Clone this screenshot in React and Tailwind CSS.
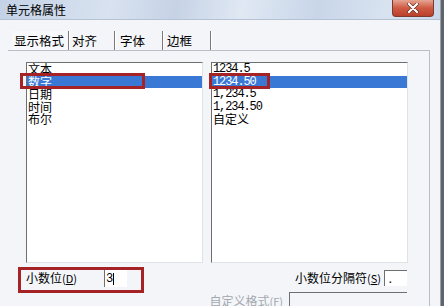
import React from "react";

const cjk = { fontFamily: '"Noto Sans CJK SC", "Noto Sans", sans-serif' };
const mono = { fontFamily: '"Liberation Mono", "Noto Sans CJK SC", monospace' };

const leftItems = ["文本", "数字", "日期", "时间", "布尔"];
const rightItems = ["1234.5", "1234.50", "1,234.5", "1,234.50", "自定义"];

const Tab = ({ label, width, pl, active }) => (
  <div
    className={`h-[19px] shrink-0 flex items-center border-r border-[#7a7a7a] shadow-[1px_0_0_#ffffff] ${active ? "bg-[#f6f8fb]" : ""}`}
    style={{ width, paddingLeft: pl }}
  >
    <span className="text-[12.5px] leading-[14px] text-black">{label}</span>
  </div>
);

const ListBox = ({ items, width, selected, numeric }) => (
  <div
    className="h-[201px] shrink-0 bg-white border-l border-t border-[#6f6f6f] border-r-[#dfe3e8] border-b-[#dfe3e8] border-r border-b"
    style={{ width }}
  >
    {items.map((it, i) => {
      const isNum = numeric && /\d/.test(it);
      return (
        <div
          key={it}
          className={`h-[12.5px] pl-[1px] flex items-center ${i === selected ? "bg-[#3a78d6] text-white" : "text-black"}`}
        >
          <span
            className={isNum ? "text-[12px] tracking-[-1.1px] leading-[12px]" : "text-[12px] leading-[12px]"}
            style={isNum ? mono : cjk}
          >
            {it}
          </span>
        </div>
      );
    })}
  </div>
);

export default function App() {
  return (
    <div className="w-[444px] h-[306px] relative overflow-hidden flex bg-[#f3f5f9]" style={cjk}>
      <div className="w-[440px] h-[306px] flex flex-col overflow-hidden">
        {/* title bar */}
        <div className="h-[20px] shrink-0 flex items-start justify-between bg-[linear-gradient(100deg,#c3d2e6_0%,#d8e2f0_25%,#c6d3e6_40%,#e0e8f3_55%,#c8d6e9_72%,#d9e3f0_88%,#cbd8ea_100%)] border-b border-[#b4c2d3]">
          <span className="ml-[6px] mt-[3px] text-[12px] leading-[14px] text-black">单元格属性</span>
          <div className="mr-[6px] w-[42px] h-[17px] rounded-b-[4px] border border-t-0 border-[#7d3a30] bg-[linear-gradient(#e5a593,#cf5a43_50%,#b9412c)] flex items-center justify-center">
            <svg width="12" height="10" viewBox="0 0 12 10">
              <path d="M2 1 L10 9 M10 1 L2 9" stroke="#5b2a22" strokeWidth="3.4" strokeLinecap="round" />
              <path d="M2 1 L10 9 M10 1 L2 9" stroke="#ffffff" strokeWidth="2.2" strokeLinecap="round" />
            </svg>
          </div>
        </div>

        {/* tabs */}
        <div className="mt-[10px] shrink-0 pl-[12px] flex items-end h-[20px]">
          <Tab label="显示格式" width={57} pl={2} active />
          <Tab label="对齐" width={46} pl={3} />
          <Tab label="字体" width={48} pl={5} />
          <Tab label="边框" width={48} pl={4} />
        </div>

        {/* tab panel */}
        <div className="ml-[8px] w-[422px] shrink-0 h-[260px] border-t border-r border-[#b7bec8] flex flex-col">
          <div className="pt-[11px] pl-[18px] flex gap-[8px] shrink-0">
            <ListBox items={leftItems} width={177} selected={1} />
            <ListBox items={rightItems} width={197} selected={1} numeric />
          </div>

          <div className="mt-[6px] shrink-0 flex items-start justify-between pr-[22px]">
            <div className="pl-[18px] flex items-center h-[18px]">
              <span className="w-[78px] text-[12px] leading-[14px] text-black">
                小数位<span className="text-[11px]">(<u>D</u>)</span>
              </span>
              <div className="w-[23px] h-[18px] bg-white border-l border-t border-[#6f6f6f] flex items-center pl-[1px]">
                <span className="text-[12px] leading-[12px] text-black" style={mono}>3</span>
                <span className="w-[1px] h-[12px] bg-black"></span>
              </div>
            </div>
            <div className="flex items-center h-[17px]">
              <span className="mr-[3px] text-[12px] leading-[14px] text-black">
                小数位分隔符<span className="text-[11px]">(<u>S</u>)</span>
              </span>
              <div className="w-[23px] h-[16px] bg-white border-l border-t border-[#6f6f6f] flex items-end pl-[2px]">
                <span className="text-[11px] leading-[12px] text-black" style={mono}>.</span>
              </div>
            </div>
          </div>

          <div className="mt-[5px] shrink-0 flex justify-end pr-[22px] items-start">
            <span className="mt-[2px] mr-[6px] text-[12px] leading-[14px] text-[#a4a8ae]">
              自定义格式<span className="text-[11px]">(<u>F</u>)</span>
            </span>
            <div className="w-[118px] h-[20px] bg-[#f3f5f9] border-l border-t border-[#6f6f6f]"></div>
          </div>
        </div>
      </div>
      <div className="w-[4px] shrink-0 bg-[#5f656d] border-l border-[#9aa1aa]"></div>

      {/* red annotation boxes */}
      <div className="absolute left-[20px] top-[73px] w-[125px] h-[16px] border-[3px] border-[#a52226] pointer-events-none"></div>
      <div className="absolute left-[209px] top-[73px] w-[61px] h-[16px] border-[3px] border-[#a52226] pointer-events-none"></div>
      <div className="absolute left-[18px] top-[267px] w-[126px] h-[26px] border-[3px] border-[#a52226] pointer-events-none"></div>
    </div>
  );
}
